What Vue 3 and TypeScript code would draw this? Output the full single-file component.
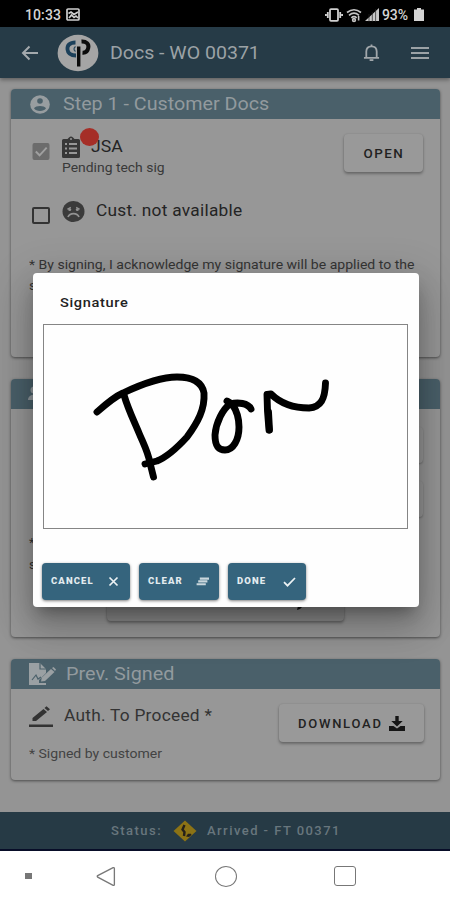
<script setup lang="ts">
interface ModalAction { label: string; icon: string; kind: string }

const actions: ModalAction[] = [
  { label: 'CANCEL', kind: 'cancel', icon: 'M2.5 2.5l8 8M10.5 2.5l-8 8' },
  { label: 'CLEAR', kind: 'clear', icon: 'M3.800 3.600h9.200M2.200 6.400h9.200M.6 9.200h9.200' },
  { label: 'DONE', kind: 'done', icon: 'M1 7.2l3.5 3.5L12 3' },
]

const strokes: string[] = [
  'M97 412C106 404 114 397 123 393C142 384 160 377 177 377C193 377 202 382 204 393C205 409 198 422 187 437C176 449 167 457 157 461L145 464',
  'M124 395C128 409 134 421 139 433C144 445 148 452 150 463L153.500 477',
  'M227 401L232 404C237 411 239 417 239 427C239 440 233 450 225 450C217 450 215 444 215 435C216 422 223 409 230 404C238 402 248 403 251 409',
  'M269 430L267.500 411L267 394.500L271 394C281 404 294 408 309 408C321 407 325 399 325.500 383',
  'M269.500 430L268.500 412',
]
</script>

<template>
  <div class="phone">
    <div class="statusbar">
      <span class="clock">10:33</span>
      <svg class="photo" viewBox="0 0 14 13"><rect x="1" y="1" width="12" height="11" rx="1" /><path d="M2.5 5.5L5 4l3 2.5L12 4M3 10l2.5-3L8 9.5l2-1.5 2 2" /></svg>
      <span class="grow"></span>
      <svg class="vibrate" viewBox="0 0 18 14"><rect x="5" y="1.2" width="8" height="11.6" rx="1" /><path d="M2.8 4v6M15.2 4v6M.9 6v2M17.1 6v2" /></svg>
      <svg class="wifi" viewBox="0 0 16 14"><path d="M1 4.5Q8-1 15 4.5M3 7.3Q8 3 13 7.3M5.3 9.8Q8 7.4 10.7 9.8" /><circle cx="8" cy="12" r="1.4" /><path d="M12.6 8v4.5" /></svg>
      <svg class="signal" viewBox="0 0 14 14"><path d="M0 13L14 0v13z" /><path class="gaps" d="M4 6v8M7.3 4v10M10.6 1v13" /></svg>
      <span class="percent">93%</span>
      <svg class="battery" viewBox="0 0 10 13"><path d="M3 0h4v1.5h3V13H0V1.5h3z" /></svg>
    </div>

    <header class="appbar">
      <svg class="back" viewBox="0 0 18 16"><path d="M17 8H2M8.5 1.5L2 8l6.5 6.5" /></svg>
      <svg class="logo" viewBox="0 0 42 38">
        <ellipse cx="21" cy="19" rx="20.4" ry="18.2" fill="#a5a5a5" />
        <path d="M18.500 8.500C12.500 8.500 10 11.500 10.500 15.500c.5 4.500 4 6 8.500 6" fill="none" stroke="#1c405a" stroke-width="3.800" />
        <path d="M18.500 12.500q-3 2.500 0 5" fill="none" stroke="#2a4a60" stroke-width="1.200" />
        <path d="M24.500 7.500c5-.3 7.500 2.700 6.800 6.200C30.700 17.200 28.500 19 25.500 18.800" fill="none" stroke="#0b0b0b" stroke-width="4" />
        <path d="M21.700 12.500V32.500" fill="none" stroke="#0b0b0b" stroke-width="3.400" />
      </svg>
      <h1><span>Docs - WO 00371</span></h1>
      <span class="grow"></span>
      <svg class="bell" viewBox="0 0 18 20"><path d="M3.500 15V8.500C3.500 5 5.500 3 9 3s5.500 2 5.500 5.500V15M1 15.200h16M9 1v2" /><path d="M7 17.500h4" /></svg>
      <svg class="menu" viewBox="0 0 18 14"><path d="M0 2h18M0 7h18M0 12h18" /></svg>
    </header>

    <main>
      <section class="card first">
        <h2 class="bar">
          <svg class="person" viewBox="0 0 20 19"><ellipse cx="10" cy="9.500" rx="9.800" ry="9.300" fill="#979da0" /><circle cx="10" cy="6" r="2.800" fill="#4a606a" /><path d="M4 13.300c2-3 10-3 12 0-2 3.500-10 3.500-12 0z" fill="#4a606a" /></svg>
          <span class="t step">Step 1 - Customer Docs</span>
        </h2>
        <div class="doc">
          <svg class="check" viewBox="0 0 18 18"><rect width="18" height="18" rx="2" fill="#6c6c6c" /><path d="M3.500 9l4 4 7.500-8" fill="none" stroke="#a0a0a0" stroke-width="2" /></svg>
          <div class="info">
            <div class="name">
              <svg class="clip" viewBox="0 0 18 22"><path d="M1.500 3H5.500L7 1.500Q9-.5 11 1.500L12.500 3h4q1.500 0 1.500 1.500v16q0 1.500-1.500 1.500h-15Q0 22 0 20.500v-16Q0 3 1.500 3z" fill="#373737" /><path d="M3 8h2M7 8h8M3 12.500h2M7 12.500h8M3 17h2M7 17h8" stroke="#979797" stroke-width="2" /><circle cx="9" cy="3" r="1" fill="#979797" /></svg>
              <span class="t jsa">JSA</span>
              <i class="badge"></i>
            </div>
            <span class="t pending">Pending tech sig</span>
          </div>
          <button class="flat open"><span>OPEN</span></button>
        </div>
        <div class="absent">
          <span class="box"></span>
          <svg class="sad" viewBox="0 0 22 21"><ellipse cx="11" cy="10.500" rx="11" ry="10.500" fill="#3b3b3b" /><path d="M4.800 8.300l3.500-2M17.200 8.300l-3.500-2" stroke="#929292" stroke-width="1.200" /><circle cx="7.200" cy="8.500" r="1.500" fill="#929292" /><circle cx="14.800" cy="8.500" r="1.500" fill="#929292" /><path d="M5.500 16c2-4.500 9-4.500 11 0" fill="none" stroke="#929292" stroke-width="1.800" /></svg>
          <span class="t cust">Cust. not available</span>
        </div>
        <p class="terms"><span class="t">* By signing, I acknowledge my signature will be applied to the</span><span class="t">s</span></p>
      </section>

      <section class="card second">
        <h2 class="bar"><svg class="group" viewBox="0 0 20 18"><circle cx="6" cy="5" r="3.500" /><path d="M0 15c0-7 12-7 12 0z" /></svg></h2>
        <div class="ghosts"><span class="flat ghost"></span><span class="flat ghost"></span></div>
        <p class="notes"><span>*</span><span>s</span></p>
        <div class="flat sign"><svg viewBox="0 0 10 10"><path d="M1 9l1-4 6-5 2 2-6 6z" /></svg></div>
      </section>

      <section class="card third">
        <h2 class="bar">
          <svg class="contract" viewBox="0 0 27 22"><path d="M0 0h11l6 6v4l-7 7v3h7v2H0z" /><path d="M11 0v6h6" class="cut" /><path d="M3 17l4-5 2 4 3-2" class="cut" /><path d="M12 18.500l.8-4L22 6l3.500 3-9.500 9z" /><path d="M23 5l1.500-1 2.500 2.500-1 1.500z" /></svg>
          <span class="t prev">Prev. Signed</span>
        </h2>
        <div class="auth">
          <svg class="pencil" viewBox="0 0 24 22"><path d="M3.500 15v-3L14.500 3l3.500 3L7 15zM15.500 2l2-1.800 3.500 3L19 5zM0 18.500h24V21H0z" /></svg>
          <span class="t">Auth. To Proceed *</span>
          <span class="grow"></span>
          <button class="flat download"><span>DOWNLOAD</span>
            <svg viewBox="0 0 16 15"><path d="M6.300 0h3.400v5h4L8 10.500 2.300 5h4zM0 10h4.500L8 12.500 11.500 10H16v5H0z" /></svg>
          </button>
        </div>
        <p class="signed"><span class="t">* Signed by customer</span></p>
      </section>
    </main>

    <footer class="status">
      <span class="state">Status:</span>
      <svg class="sign-icon" viewBox="0 0 24 22"><path d="M12 .5l11.500 10.500L12 21.500.5 11z" fill="#8c7315" /><path d="M11.500 5L9.500 9.500l2 2.500-.5 4" fill="none" stroke="#24201a" stroke-width="2.400" /><path d="M13 16.500l2-2.800h3l.5 1.300-2.500 2z" fill="#24201a" /></svg>
      <span class="arrived">Arrived - FT 00371</span>
    </footer>

    <nav class="navbar">
      <i class="dot"></i>
      <svg class="nav-back" viewBox="0 0 21 21"><path d="M18 1.200L1.800 9.500q-1 .8 0 1.700L18 19.800q1.300.4 1.300-1V2.200q0-1.400-1.300-1z" /></svg>
      <i class="home"></i>
      <i class="recent"></i>
    </nav>

    <div class="modal" role="dialog">
      <h3><span>Signature</span></h3>
      <svg class="pad" viewBox="44 325 363 203"><path v-for="s in strokes" :key="s" :d="s" /></svg>
      <div class="actions">
        <button v-for="a in actions" :key="a.kind" :class="a.kind">
          <span>{{ a.label }}</span>
          <svg viewBox="0 0 13 13"><path :d="a.icon" /></svg>
        </button>
      </div>
    </div>
  </div>
</template>

<style>
body { background: #959595; }
</style>

<style scoped>
* { box-sizing: border-box; }
.phone { position: relative; width: 450px; height: 900px; overflow: hidden; display: flex; flex-direction: column; background: #949494; font-family: Roboto, "Liberation Sans", sans-serif; color: #242424; }
svg { display: block; flex: none; overflow: visible; }
h1, h2, h3, p { margin: 0; font-weight: 400; }
button { border: 0; font-family: inherit; padding: 0; }
.grow { flex: 1; }
.t { display: inline-block; white-space: nowrap; transform: scaleX(1.08); transform-origin: left center; }

.statusbar { height: 27px; flex: none; background: #000; color: #d4d4d4; display: flex; align-items: center; padding: 2px 26px 0 25px; font-size: 14px; font-weight: 500; }
.clock { width: 41px; letter-spacing: .1px; }
.clock, .percent { white-space: nowrap; }
.photo { width: 14px; height: 13px; fill: none; stroke: #cfcfcf; stroke-width: 1.7; }
.vibrate { width: 18px; height: 14px; fill: none; stroke: #d0d0d0; stroke-width: 1.8; margin-right: 3px; }
.wifi { width: 16px; height: 14px; fill: none; stroke: #c4c4c4; stroke-width: 1.6; margin-right: 3px; }
.signal { width: 14px; height: 14px; fill: #c8c8c8; margin-right: 3px; }
.gaps { stroke: #222; stroke-width: .7; }
.percent { width: 32px; font-size: 14px; letter-spacing: -.1px; }
.battery { width: 10px; height: 13px; fill: #d4d4d4; }

.appbar { height: 51px; flex: none; background: #263b47; display: flex; align-items: center; padding: 0 21px 0 21px; box-shadow: 0 2px 4px rgba(0,0,0,.35); }
.back { width: 18px; height: 16px; fill: none; stroke: #a3a9ad; stroke-width: 2; }
.logo { width: 42px; height: 38px; margin-left: 18px; }
h1 { font-size: 18px; color: #9ca2a6; margin-left: 11px; white-space: nowrap; }
h1 span { display: inline-block; transform: scaleX(1.085); transform-origin: left; }
.bell { width: 17px; height: 20px; fill: none; stroke: #a1a7ab; stroke-width: 1.9; margin-right: 31px; }
.menu { width: 18px; height: 14px; fill: none; stroke: #9ba2a6; stroke-width: 2; }

main { flex: 1; padding: 11px 10px 0 11px; display: flex; flex-direction: column; gap: 22px; }
.card { background: #979797; border-radius: 4px; box-shadow: 0 1px 3px rgba(0,0,0,.5); flex: none; }
.first { height: 268px; }
.second { height: 258px; }
.third { height: 121px; }
.bar { height: 30px; background: #4a606a; border-radius: 4px 4px 0 0; display: flex; align-items: center; color: #929a9e; font-size: 18px; padding-bottom: 1px; }
.step { transform: scaleX(1.095); }
.prev { transform: scaleX(1.1); }
.person { width: 20px; height: 19px; margin: 2px 13px 0 19px; }
.doc { height: 70px; display: flex; padding: 15px 17px 0 21px; }
.check { width: 18px; height: 17px; margin-top: 9px; }
.info { margin-left: 12px; display: flex; flex-direction: column; flex: 1; }
.name { position: relative; display: flex; height: 25px; align-items: center; }
.clip { width: 18px; height: 22px; margin-top: 0; }
.jsa { font-size: 16px; margin: 0 0 0 11px; transform: scaleX(1.1); }
.badge { position: absolute; left: 18px; top: -6px; width: 19px; height: 18px; border-radius: 50%; background: #a52e27; }
.pending { font-size: 13px; line-height: 16px; color: #393939; margin-top: 1px; transform: scaleX(1.07); }
.flat { background: #999; border-radius: 4px; box-shadow: 0 2px 3px rgba(0,0,0,.3), 0 0 2px rgba(0,0,0,.12); }
.open { width: 79px; height: 38px; font-size: 13px; font-weight: 500; letter-spacing: 1.5px; color: #222; }
.open span { display: inline-block; transform: scaleX(1.03); }
.absent { display: flex; height: 44px; padding: 11px 0 0 21px; }
.box { width: 18px; height: 17px; border: 2px solid #333; border-radius: 2px; margin-top: 7px; }
.sad { width: 23px; height: 21px; margin: 1px 0 0 12px; }
.cust { font-size: 16px; line-height: 22px; margin-left: 11px; letter-spacing: .25px; }
.terms { padding: 21px 0 0 18px; font-size: 13px; line-height: 21px; color: #353535; display: flex; flex-direction: column; align-items: flex-start; }

.group { width: 20px; height: 18px; margin-left: 17px; fill: #929a9e; }
.ghosts { height: 108px; padding: 18px 17px 0 0; display: flex; flex-direction: column; align-items: flex-end; gap: 18px; }
.ghost { width: 79px; height: 36px; background: #979797; box-shadow: 0 1px 2px rgba(0,0,0,.25); }
.notes { height: 67px; padding: 15px 0 0 18px; font-size: 13px; line-height: 22px; display: flex; flex-direction: column; color: #333; }
.sign { width: 237px; height: 37px; margin: 0 auto 0 96px; background: #8c8c8c; display: flex; justify-content: flex-end; align-items: center; padding-right: 38px; }
.sign svg { width: 10px; height: 10px; fill: #111; margin-top: 6px; }

.contract { width: 27px; height: 22px; margin: 1px 10px 0 18px; fill: #9aa0a3; }
.cut { fill: none; stroke: #4a606a; stroke-width: 1.2; }
.auth { display: flex; height: 55px; padding: 0 16px 0 18px; font-size: 16px; color: #333; }
.pencil { width: 24px; height: 22px; margin: 17px 11px 0 0; fill: #333; }
.auth .t { line-height: 54px; letter-spacing: .25px; }
.download { width: 145px; height: 38px; margin-top: 15px; display: flex; align-items: center; justify-content: center; color: #222; font-size: 13px; font-weight: 500; letter-spacing: 1.75px; }
.download span { width: 91px; text-align: left; }
.download svg { width: 16px; height: 15px; fill: #151515; }
.signed { padding: 2px 0 0 18px; font-size: 13px; line-height: 16px; color: #434343; }

.status { height: 39px; flex: none; background: #263a45; border-bottom: 2px solid #080d28; display: flex; align-items: center; padding-left: 111px; font-size: 13px; font-weight: 500; letter-spacing: 1.45px; color: #68767d; }
.state { width: 62px; }
.sign-icon { width: 24px; height: 22px; margin-right: 10px; }
.arrived { white-space: nowrap; }

.navbar { height: 49px; flex: none; background: #fff; display: flex; align-items: center; padding: 1px 0 0 25px; }
.dot { width: 7px; height: 6px; background: #777; }
.nav-back { width: 20px; height: 21px; fill: none; stroke: #787878; stroke-width: 1.4; margin-left: 64px; }
.home { width: 22px; height: 21px; border: 1.500px solid #777; border-radius: 50%; margin-left: 99px; }
.recent { width: 22px; height: 20px; border: 1.500px solid #777; border-radius: 3px; margin-left: 97px; }

.modal { position: absolute; left: 33px; top: 273px; width: 386px; height: 334px; background: #fefefe; border-radius: 4px; padding: 0 10px; box-shadow: 0 10px 14px -6px rgba(0,0,0,.3), 0 22px 34px 3px rgba(0,0,0,.16), 0 8px 40px 7px rgba(0,0,0,.14); }
h3 { height: 51px; padding: 20px 0 0 17px; font-size: 13.500px; line-height: 19px; font-weight: 500; color: #222; }
h3 span { display: inline-block; letter-spacing: .6px; transform: scaleX(1.08); transform-origin: left; }
.pad { width: 365px; height: 205px; border: 1px solid #858585; fill: none; stroke: #000; stroke-width: 6.900; stroke-linecap: round; stroke-linejoin: round; }
.actions { display: flex; gap: 9px; margin-top: 34px; margin-left: -1px; }
.actions button { height: 37px; background: #35647d; border-radius: 4px; color: #e2ebef; display: flex; align-items: center; justify-content: space-between; padding: 0 10px 2px 9px; font-size: 9.500px; font-weight: 900; letter-spacing: 1.1px; box-shadow: 0 1px 3px rgba(0,0,0,.5); }
.cancel { width: 88px; }
.clear { width: 80px; }
.done { width: 78px; }
.actions svg { width: 13px; height: 13px; fill: none; stroke: #edf2f4; stroke-width: 1.7; margin-top: 2px; }
.actions .clear svg { stroke: #c9d6dc; stroke-width: 2.1; }
</style>
